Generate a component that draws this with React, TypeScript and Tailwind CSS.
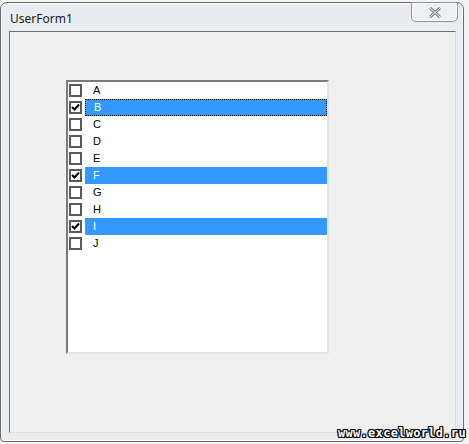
import React from "react";

const items = [
  { l: "A", c: false },
  { l: "B", c: true, focus: true },
  { l: "C", c: false },
  { l: "D", c: false },
  { l: "E", c: false },
  { l: "F", c: true },
  { l: "G", c: false },
  { l: "H", c: false },
  { l: "I", c: true },
  { l: "J", c: false },
];

function Check() {
  return (
    <svg width="9" height="9" viewBox="0 0 9 9">
      <path d="M1 4 L3.5 6.5 L8 1.5" stroke="#000" strokeWidth="2" fill="none" />
    </svg>
  );
}

export default function App() {
  return (
    <div className="relative w-[469px] h-[444px] bg-[#f4f4f4] pt-[2px] overflow-hidden font-['Liberation_Sans',sans-serif]">
      <div className="relative w-[464px] h-[440px] rounded-t-[7px] rounded-b-[4px] border border-[#6b6b6b] bg-[#e9ecf0] shadow-[inset_0_0_0_1px_#fbfcfd] flex flex-col">
        <div className="h-[27px] flex items-start justify-between">
          <div className="pl-[9px] pt-[9px] text-[12px] leading-[14px] text-[#1a1a1a] font-['Noto_Sans',sans-serif]">UserForm1</div>
          <div className="mr-[5px] mt-[-1px] w-[47px] h-[20px] rounded-b-[5px] border border-[#8d939b] bg-[#eef0f3] shadow-[inset_0_0_0_1px_#fafbfc] flex items-center justify-center">
            <svg width="14" height="11" viewBox="0 0 14 11">
              <path d="M2 1 L12 10 M12 1 L2 10" stroke="#7b7f86" strokeWidth="3" />
              <path d="M2 1 L12 10 M12 1 L2 10" stroke="#f4f5f7" strokeWidth="1" />
            </svg>
          </div>
        </div>
        <div className="ml-[8px] mt-[1px] w-[447px] h-[402px] bg-[#f0f0f0] border-t border-l border-[#6e6e6e] border-r border-r-[#dcdcdc] border-b border-b-[#dcdcdc]">
          <div className="ml-[56px] mt-[48px] w-[263px] h-[274px] bg-white border-t-2 border-l-2 border-t-[#7a7a7a] border-l-[#7a7a7a] border-r-2 border-b-2 border-r-[#e4e4e4] border-b-[#e4e4e4]">
            {items.map((it) => (
              <div key={it.l} className="h-[17px] flex items-center">
                <div className="ml-[1px] w-[13px] h-[13px] border-2 border-[#5a5a5a] bg-white flex items-center justify-center">
                  {it.c && <Check />}
                </div>
                <div
                  className={
                    "ml-[3px] h-[17px] flex-1 flex items-center pl-[8px] text-[11px] " +
                    (it.c ? "bg-[#3399ff] text-white " : "text-black ") +
                    (it.focus ? "border border-dotted border-black pl-[7px]" : "")
                  }
                >
                  {it.l}
                </div>
              </div>
            ))}
          </div>
        </div>
      </div>
      <div className="absolute left-[338px] top-[426px] text-[12px] leading-[15px] font-bold tracking-[0.3px] text-white font-['DejaVu_Sans_Mono',monospace] [text-shadow:1px_0_0_#000,-1px_0_0_#000,0_1px_0_#000,0_-1px_0_#000,1px_1px_0_#000,-1px_-1px_0_#000,1px_-1px_0_#000,-1px_1px_0_#000]">
        www.excelworld.ru
      </div>
    </div>
  );
}
